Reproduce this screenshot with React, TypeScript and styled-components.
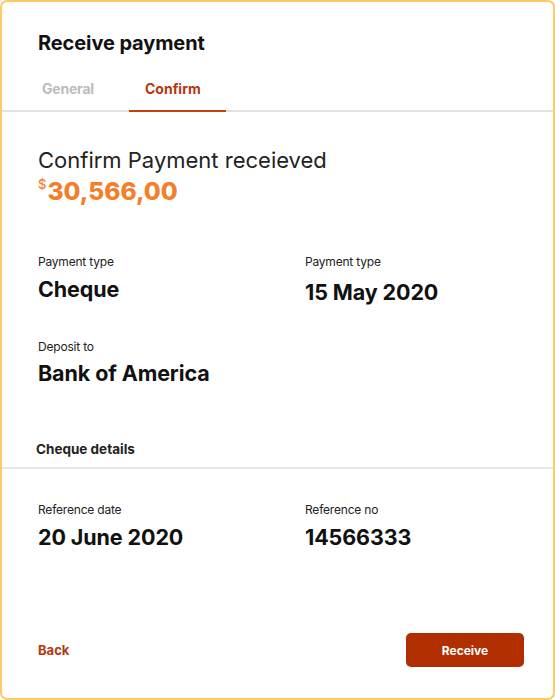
import React from "react";
import styled, { createGlobalStyle } from "styled-components";

const Global = createGlobalStyle`
  html, body { margin: 0; padding: 0; background: #fff; }
  body { font-family: Inter, "Noto Sans", sans-serif; color: #111; }
  * { box-sizing: border-box; }
`;

const Card = styled.div`
  width: 555px;
  height: 700px;
  border: 2px solid #ffc965;
  border-radius: 7px;
  background: #fff;
  display: flex;
  flex-direction: column;
`;

const Header = styled.div`
  padding: 30px 0 0 36px;
`;

const Title = styled.h1`
  margin: 0;
  font-size: 20px;
  font-weight: 700;
  line-height: 22px;
  color: #111;
  letter-spacing: -0.1px;
`;

const Tabs = styled.div`
  display: flex;
  margin-top: 21px;
  border-bottom: 2px solid #e2e2e2;
`;

const Tab = styled.div<{ $active?: boolean }>`
  width: ${(p) => (p.$active ? "97px" : "127px")};
  padding: 5px 0 13px ${(p) => (p.$active ? "16px" : "40px")};
  font-size: 14px;
  font-weight: 700;
  line-height: 17px;
  margin-bottom: -2px;
  letter-spacing: ${(p) => (p.$active ? "0" : "-0.2px")};
  color: ${(p) => (p.$active ? "#b5360f" : "#bcbcbc")};
  border-bottom: 2px solid ${(p) => (p.$active ? "#c2410c" : "transparent")};
`;

const Body = styled.div<{ $top: number }>`
  padding: ${(p) => p.$top}px 36px 0 36px;
`;

const Lead = styled.div`
  font-size: 22px;
  font-weight: 400;
  color: #222;
  line-height: 26px;
`;

const Amount = styled.div`
  color: #f2802a;
  font-size: 24.5px;
  font-weight: 800;
  line-height: 30px;
  margin-top: 3px;
  display: flex;
  align-items: flex-start;
`;

const Currency = styled.span`
  font-size: 13px;
  font-weight: 500;
  line-height: 13px;
  margin-top: 2px;
  margin-right: 1px;
`;

const Grid = styled.div<{ $top: number }>`
  display: grid;
  grid-template-columns: 267px 1fr;
  row-gap: 34px;
  margin-top: ${(p) => p.$top}px;
`;

const Field = styled.div`
  display: flex;
  flex-direction: column;
`;

const Label = styled.div`
  font-size: 12px;
  line-height: 16px;
  letter-spacing: -0.2px;
  color: #222;
`;

const Value = styled.div<{ $gap?: number }>`
  font-size: 21.5px;
  font-weight: 700;
  line-height: 26px;
  color: #111;
  margin-top: ${(p) => p.$gap ?? 6}px;
  letter-spacing: -0.1px;
`;

const Section = styled.div`
  margin-top: 55px;
  padding: 0 0 10px 34px;
  border-bottom: 2px solid #e8e8e8;
  font-size: 13.5px;
  font-weight: 700;
  color: #222;
  line-height: 16px;
`;

const Footer = styled.div`
  margin-top: auto;
  padding: 0 29px 31px 36px;
  display: flex;
  align-items: center;
  justify-content: space-between;
`;

const BackButton = styled.button`
  background: none;
  border: none;
  padding: 0;
  font-family: inherit;
  font-size: 13px;
  font-weight: 700;
  color: #b5360f;
  cursor: pointer;
`;

const PrimaryButton = styled.button`
  width: 118px;
  height: 34px;
  border: none;
  border-radius: 5px;
  background: #b02e00;
  color: #fff;
  font-family: inherit;
  font-size: 12px;
  font-weight: 700;
  cursor: pointer;
`;

export default function App() {
  return (
    <>
      <Global />
      <Card>
        <Header>
          <Title>Receive payment</Title>
        </Header>
        <Tabs>
          <Tab>General</Tab>
          <Tab $active>Confirm</Tab>
        </Tabs>
        <Body $top={35}>
          <Lead>Confirm Payment receieved</Lead>
          <Amount>
            <Currency>$</Currency>30,566,00
          </Amount>
          <Grid $top={48}>
            <Field>
              <Label>Payment type</Label>
              <Value>Cheque</Value>
            </Field>
            <Field>
              <Label>Payment type</Label>
              <Value $gap={9}>15 May 2020</Value>
            </Field>
            <Field>
              <Label>Deposit to</Label>
              <Value $gap={5}>Bank of America</Value>
            </Field>
          </Grid>
        </Body>
        <Section>Cheque details</Section>
        <Body $top={33}>
          <Grid $top={0}>
            <Field>
              <Label>Reference date</Label>
              <Value $gap={6}>20 June 2020</Value>
            </Field>
            <Field>
              <Label>Reference no</Label>
              <Value $gap={6}>14566333</Value>
            </Field>
          </Grid>
        </Body>
        <Footer>
          <BackButton>Back</BackButton>
          <PrimaryButton>Receive</PrimaryButton>
        </Footer>
      </Card>
    </>
  );
}
